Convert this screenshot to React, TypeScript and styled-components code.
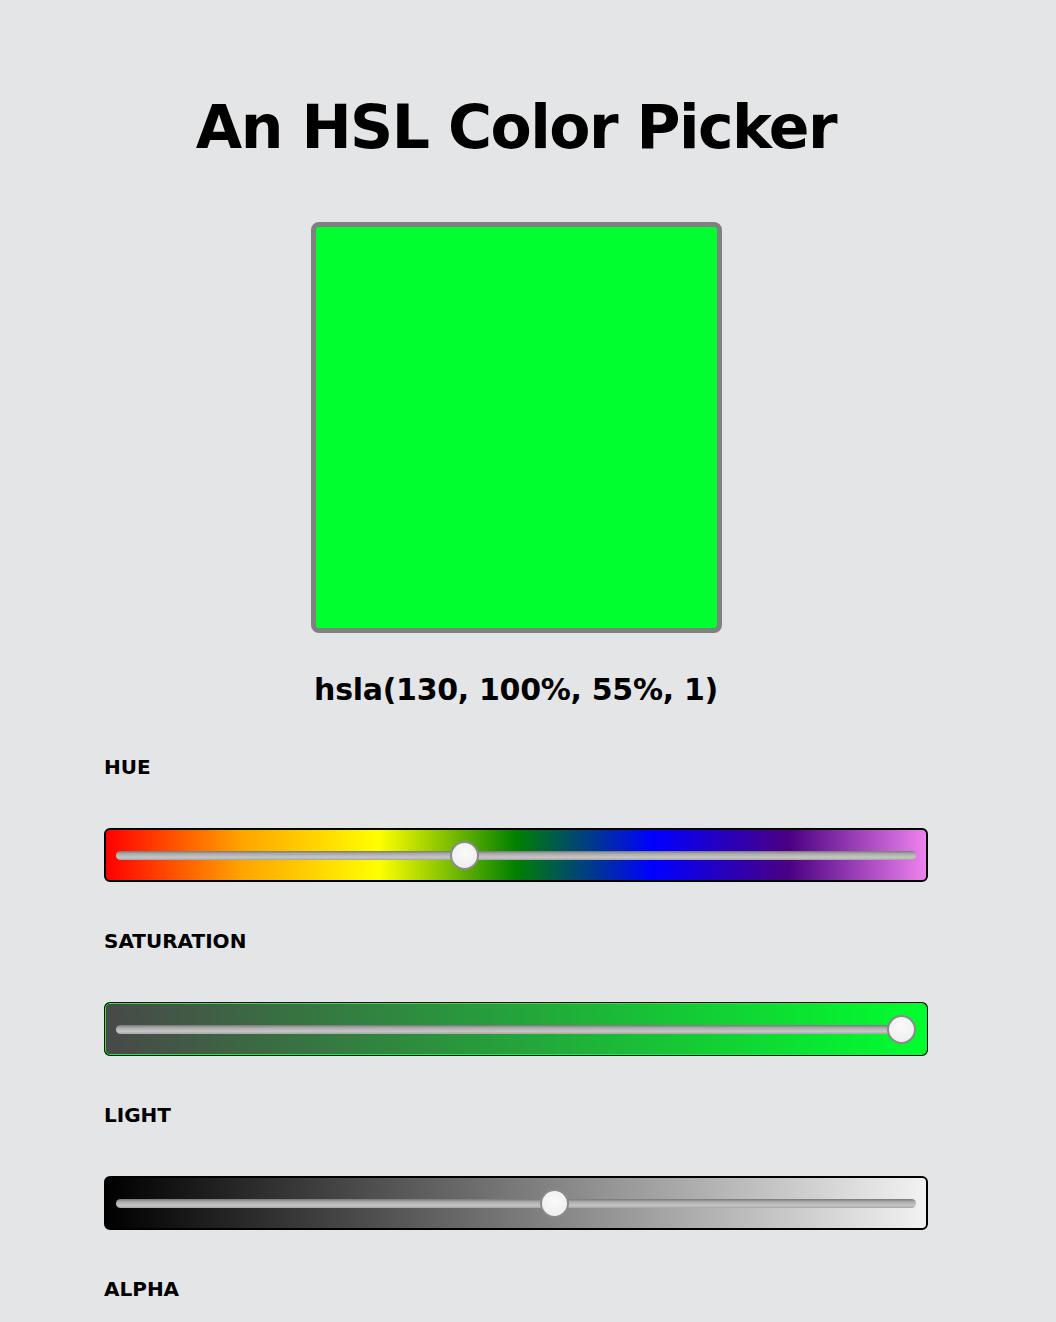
import styled, { createGlobalStyle } from "styled-components";

const hue = 130;
const saturation = 100;
const light = 55;
const alpha = 1;

const label = `hsla(${hue}, ${saturation}%, ${light}%, ${alpha})`;
// rendered swatch tone
const swatch = "#00ff2e";

const GlobalStyle = createGlobalStyle`
  html, body {
    margin: 0;
    padding: 0;
    background: #e4e5e7;
  }
  body {
    font-family: "DejaVu Sans", "Liberation Sans", sans-serif;
    color: #000;
  }
`;

export default function App() {
  return (
    <>
      <GlobalStyle />
      <Page>
        <Title>An HSL Color Picker</Title>
        <Swatch style={{ backgroundColor: swatch }} />
        <Readout>{label}</Readout>
        <Fields>
          <Field>
            <Label htmlFor="hue">Hue</Label>
            <SliderFrame $gradient="linear-gradient(to right, red, orange, yellow, green, blue, indigo, violet)">
              <Range id="hue" min={0} max={300} defaultValue={hue} />
            </SliderFrame>
          </Field>
          <Field>
            <Label htmlFor="saturation">Saturation</Label>
            <SliderFrame $under={swatch} $gradient={`linear-gradient(to right, #484848, ${swatch})`}>
              <Range id="saturation" min={0} max={100} defaultValue={saturation} />
            </SliderFrame>
          </Field>
          <Field>
            <Label htmlFor="light">Light</Label>
            <SliderFrame $gradient="linear-gradient(to right, #000, #f2f2f2)">
              <Range id="light" min={0} max={100} defaultValue={light} />
            </SliderFrame>
          </Field>
          <Field>
            <Label htmlFor="alpha">Alpha</Label>
            <SliderFrame $gradient={`linear-gradient(to right, transparent, ${swatch})`}>
              <Range id="alpha" min={0} max={1} step={0.01} defaultValue={alpha} />
            </SliderFrame>
          </Field>
        </Fields>
      </Page>
    </>
  );
}

const Page = styled.main`
  width: 824px;
  margin-left: 104px;
  padding: 91px 0 60px;
  display: flex;
  flex-direction: column;
  align-items: center;
`;

const Title = styled.h1`
  margin: 0;
  font-size: 60px;
  line-height: 72px;
  font-weight: 700;
  letter-spacing: -1.5px;
`;

const Swatch = styled.div`
  box-sizing: border-box;
  width: 411px;
  height: 411px;
  margin-top: 59px;
  border: 5px solid #808080;
  border-radius: 8px;
`;

const Readout = styled.p`
  margin: 39px 0 0;
  font-size: 30px;
  line-height: 36px;
  font-weight: 700;
  letter-spacing: -0.3px;
`;

const Fields = styled.div`
  align-self: stretch;
  margin-top: 47px;
  display: flex;
  flex-direction: column;
  gap: 47px;
`;

const Field = styled.div`
  display: flex;
  flex-direction: column;
  gap: 49px;
`;

const Label = styled.label`
  font-size: 20px;
  line-height: 24px;
  font-weight: 700;
  text-transform: uppercase;
`;

const SliderFrame = styled.div<{ $gradient: string; $under?: string }>`
  box-sizing: border-box;
  height: 54px;
  padding: 0 10px;
  display: flex;
  align-items: center;
  border: 2px solid #000;
  border-radius: 6px;
  background: ${(p) => p.$gradient};
  outline: ${(p) => (p.$under ? `1px solid ${p.$under}` : "none")};
  outline-offset: -2px;
`;

const Range = styled.input.attrs({ type: "range" })`
  -webkit-appearance: none;
  appearance: none;
  width: 100%;
  height: 30px;
  margin: 0;
  background: transparent;

  &::-webkit-slider-runnable-track {
    height: 9px;
    border-radius: 5px;
    background: linear-gradient(#767676, #aaaaaa 30%, #c6c6c6 70%, #a6a6a6);
  }

  &::-webkit-slider-thumb {
    -webkit-appearance: none;
    box-sizing: border-box;
    width: 29px;
    height: 29px;
    margin-top: -10px;
    border-radius: 50%;
    border: 2px solid #8b8b8b;
    background: radial-gradient(circle at 50% 40%, #fafafa, #ebebeb);
  }
`;
